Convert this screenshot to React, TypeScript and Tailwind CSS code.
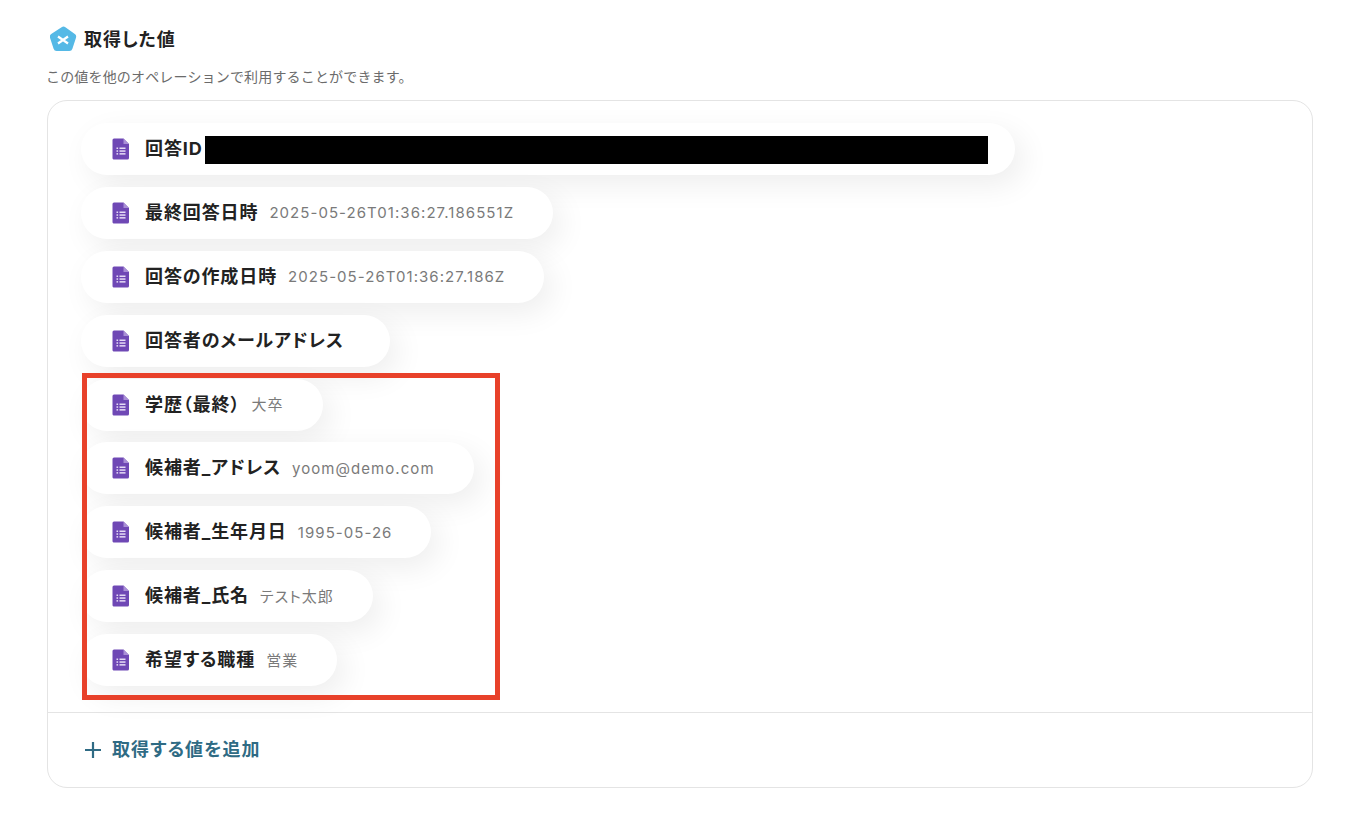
const FONT = "font-['Inter','Noto_Sans_CJK_JP',sans-serif]"

interface OutputItem {
  label: string
  value?: string
}

const items: OutputItem[] = [
  { label: '最終回答日時', value: '2025-05-26T01:36:27.186551Z' },
  { label: '回答の作成日時', value: '2025-05-26T01:36:27.186Z' },
  { label: '回答者のメールアドレス' },
  { label: '学歴（最終）', value: '大卒' },
  { label: '候補者_アドレス', value: 'yoom@demo.com' },
  { label: '候補者_生年月日', value: '1995-05-26' },
  { label: '候補者_氏名', value: 'テスト太郎' },
  { label: '希望する職種', value: '営業' },
]

const FormIcon = () => (
  <svg width="18" height="22" viewBox="0 0 18 22" className="shrink-0">
    <path d="M2 0.5h9.5L17 6v14a1.5 1.5 0 0 1-1.5 1.5h-13A1.5 1.5 0 0 1 .5 20V2A1.5 1.5 0 0 1 2 .5z" fill="#6f48b5" />
    <path d="M11.5 .5L17 6h-5.5z" fill="#a98fd6" />
    <g fill="#e6dcf5">
      <rect x="4.5" y="9.5" width="1.6" height="1.5" />
      <rect x="7.5" y="9.5" width="6" height="1.5" />
      <rect x="4.5" y="12.3" width="1.6" height="1.5" />
      <rect x="7.5" y="12.3" width="6" height="1.5" />
      <rect x="4.5" y="15.1" width="1.6" height="1.5" />
      <rect x="7.5" y="15.1" width="6" height="1.5" />
    </g>
  </svg>
)

const Pill = ({ label, children, className }: { label: string; children?: React.ReactNode; className?: string }) => (
  <div className={`flex h-[52px] w-fit items-center rounded-full bg-white pl-[31px] shadow-[8px_10px_30px_rgba(0,0,0,0.07)] ${className ?? 'pr-[38px]'}`}>
    <FormIcon />
    <span className="ml-[15px] text-[18px] leading-none font-bold tracking-[0.05em] text-[#222222] [font-feature-settings:'palt']">{label}</span>
    {children}
  </div>
)

export default function App() {
  return (
    <div className={`min-h-[838px] bg-white pt-[26px] pr-[53px] pl-[47px] ${FONT}`}>
      <div className="flex items-center gap-[7px] pl-[3px]">
        <svg width="27" height="27" viewBox="0 0 27 27">
          <path d="M11.6 1.3a3.2 3.2 0 0 1 3.8 0l9.4 6.8a3.2 3.2 0 0 1 1.2 3.6l-3.6 11a3.2 3.2 0 0 1-3 2.2H6.6a3.2 3.2 0 0 1-3-2.2L0 11.7a3.2 3.2 0 0 1 1.2-3.6z" fill="#55b9e6" />
          <path d="M8 10.500l10 7M18 10.500l-10 7" stroke="#ffffff" strokeWidth="2.2" />
        </svg>
        <h2 className="text-[18px] leading-[27px] font-bold tracking-[0.05em] text-[#222222] [font-feature-settings:'palt']">取得した値</h2>
      </div>
      <p className="mt-[14px] -ml-[1px] text-[14px] leading-[20px] tracking-[0.012em] text-[#6b6b6b]">
        この値を他のオペレーションで利用することができます。
      </p>

      <div className="relative mt-[13px] rounded-[20px] border border-[#e4e4e4] bg-white">
        <div className="flex flex-col gap-[11.88px] px-[33px] pt-[22px] pb-[26px]">
          <Pill label="回答ID" className="pr-[27px]">
            <div className="mt-[2px] ml-[2px] h-[28px] w-[783px] bg-black" />
          </Pill>
          {items.map((item) => (
            <Pill key={item.label} label={item.label} className={item.value ? 'pr-[39px]' : 'pr-[46px]'}>
              {item.value && (
                <span className="ml-[11px] text-[15px] leading-none tracking-[0.07em] text-[#7a7a7a] [font-feature-settings:'palt']">{item.value}</span>
              )}
            </Pill>
          ))}
        </div>
        {/* annotation frame over the last five rows */}
        <div className="absolute top-[272px] left-[34px] h-[327px] w-[418px] border-[5px] border-[#e8412a]" />
        <div className="flex h-[75px] items-center gap-[10px] border-t border-[#e4e4e4] pl-[36px]">
          <svg width="18" height="18" viewBox="0 0 18 18">
            <path d="M9 1v16M1 9h16" stroke="#2f6b84" strokeWidth="2.2" />
          </svg>
          <span className="text-[18px] leading-none font-bold tracking-[0.06em] text-[#2f6b84] [font-feature-settings:'palt']">取得する値を追加</span>
        </div>
      </div>
    </div>
  )
}
